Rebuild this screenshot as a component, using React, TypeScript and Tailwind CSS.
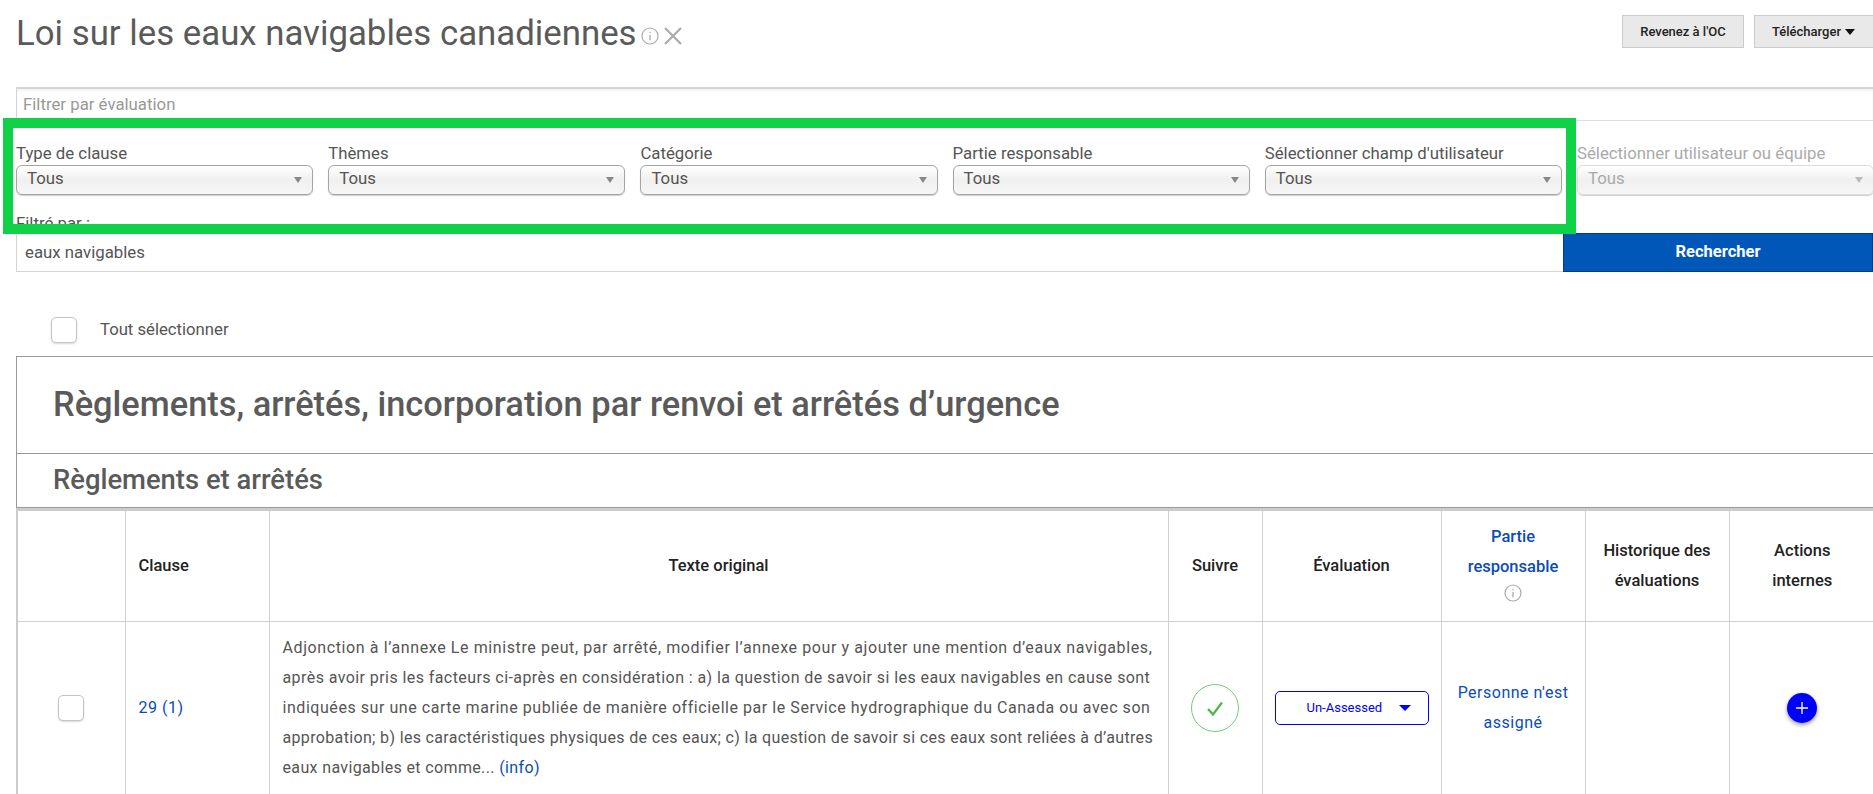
import React from "react";

const filters = [
  { label: "Type de clause" },
  { label: "Thèmes" },
  { label: "Catégorie" },
  { label: "Partie responsable" },
  { label: "Sélectionner champ d'utilisateur" },
  { label: "Sélectionner utilisateur ou équipe", disabled: true },
];

const InfoIcon = ({ className }: { className: string }) => (
  <svg viewBox="0 0 18 18" fill="none" stroke="currentColor" className={className}>
    <circle cx="9" cy="9" r="8" strokeWidth="1.2" />
    <path d="M9 8v5.2" strokeWidth="1.3" />
    <path d="M9 4.8v1.4" strokeWidth="1.3" />
  </svg>
);

const Checkbox = () => (
  <span className="block h-[26px] w-[26px] rounded-[5px] border border-[#c4c4c4] bg-white shadow-[0_1px_2px_rgba(0,0,0,0.15)]" />
);

const FilterSelect = ({ label, disabled }: { label: string; disabled?: boolean }) => (
  <div className={`w-[297.2px] shrink-0 ${disabled ? "text-[#aaa]" : "text-[#555]"}`}>
    <div className="h-[24px] text-[16.8px] leading-[24px]">{label}</div>
    <div
      className={`flex h-[30px] items-center justify-between rounded-[6px] border bg-linear-to-b from-white via-[#f0f0f0] to-[#f6f6f6] pr-[10px] pb-[2px] pl-[10px] text-[16.8px] shadow-[0_1px_1px_rgba(0,0,0,0.2)] ${
        disabled ? "border-[#ddd]" : "border-[#a5a5a5]"
      }`}
    >
      <span>Tous</span>
      <span
        className={`mt-[2px] h-0 w-0 border-x-[4px] border-t-[6px] border-x-transparent ${
          disabled ? "border-t-[#bbb]" : "border-t-[#888]"
        }`}
      />
    </div>
  </div>
);

const App = () => {
  return (
    <div className="relative h-[794px] w-[1873px] overflow-hidden bg-white font-['Roboto',sans-serif] text-[#555]">
      {/* Title bar */}
      <header className="flex h-[87px] items-start justify-between pl-4">
        <div className="mt-[13px] flex items-center text-[#aaa]">
          <h1 className="text-[34.8px] leading-[40px] font-normal text-[#5a5a5a]">Loi sur les eaux navigables canadiennes</h1>
          <InfoIcon className="mt-[5px] ml-[4px] h-[18px] w-[18px]" />
          <svg viewBox="0 0 18 18" className="mt-[5px] ml-[5px] h-[18px] w-[18px]" stroke="currentColor" strokeWidth="2.2">
            <path d="M1 1l16 16M17 1L1 17" />
          </svg>
        </div>
        <div className="mt-[15px] flex shrink-0 gap-[10px] pl-[10px] text-[13px] font-medium text-[#222]">
          <button className="h-[33px] w-[122px] border-[1.5px] border-[#ccc] bg-[#e9e9e9]">Revenez à l'OC</button>
          <button className="mr-[-10px] flex h-[33px] w-[129px] items-center gap-[4px] border-[1.5px] border-[#ccc] bg-[#e9e9e9] pl-[17px]">
            Télécharger
            <span className="h-0 w-0 border-x-[5.5px] border-t-[6px] border-x-transparent border-t-[#111]" />
          </button>
        </div>
      </header>

      {/* Filter panel */}
      <section className="ml-4">
        <div className="h-[33px] border-t-2 border-l border-[#d4d4d4] pl-[6px] text-[16.8px] leading-[31px] text-[#999] shadow-[inset_0_2px_3px_rgba(0,0,0,0.05)]">
          Filtrer par évaluation
        </div>
        <div className="h-[114px] border-t border-[#ddd]">
          <div className="flex gap-[15px] pt-[20px]">
            {filters.map((f) => (
              <FilterSelect key={f.label} label={f.label} disabled={f.disabled} />
            ))}
          </div>
          <div className="mt-[18px] text-[16.8px] leading-[20px]">Filtré par :</div>
        </div>
        <div className="flex h-[38px] items-stretch border-b-[1.5px] border-l border-[#d4d4d4]">
          <div className="flex-1 pl-[8px] text-[16.8px] leading-[37px]">eaux navigables</div>
          <button className="-mt-px h-[39px] w-[310px] border border-[#0a3a7a] bg-[#0057b8] text-[16.5px] font-bold text-white">
            Rechercher
          </button>
        </div>
      </section>

      {/* Select all */}
      <div className="mt-[45px] flex h-[26px] items-center pl-[51px]">
        <Checkbox />
        <span className="ml-[23px] text-[16.7px] leading-[24px]">Tout sélectionner</span>
      </div>

      {/* Section headings */}
      <section className="mt-[13px] ml-4">
        <div className="flex h-[97px] items-center border-t border-l border-[#999] pl-[36px] text-[34.4px] font-medium text-[#5a5a5a]">
          Règlements, arrêtés, incorporation par renvoi et arrêtés d’urgence
        </div>
        <div className="flex h-[55px] items-center border-t border-b border-l border-[#999] pl-[36px] text-[27.4px] font-medium text-[#5a5a5a]">
          Règlements et arrêtés
        </div>

        {/* Clause table */}
        <table className="w-[1858px] table-fixed border-collapse border-t-[3px] border-l-2 border-[#ccc] text-center text-[16px] leading-[30px] tracking-[0.5px]">
          <colgroup>
            <col className="w-[108px]" />
            <col className="w-[144px]" />
            <col className="w-[899px]" />
            <col className="w-[94px]" />
            <col className="w-[179px]" />
            <col className="w-[144px]" />
            <col className="w-[144px]" />
            <col className="w-[146px]" />
          </colgroup>
          <thead className="text-[16.5px] font-medium tracking-normal text-[#222]">
            <tr className="h-[112px] border-b border-[#d0d0d0]">
              <th className="border-r border-[#d0d0d0]" />
              <th className="border-r border-[#d0d0d0] pl-[13px] text-left font-medium">Clause</th>
              <th className="border-r border-[#d0d0d0] font-medium">Texte original</th>
              <th className="border-r border-[#d0d0d0] font-medium">Suivre</th>
              <th className="border-r border-[#d0d0d0] font-medium">Évaluation</th>
              <th className="border-r border-[#d0d0d0] px-3 pb-[9px] font-medium text-[#0b4db5]">
                Partie responsable
                <InfoIcon className="mx-auto mt-[2px] h-[18px] w-[18px] text-[#aaa]" />
              </th>
              <th className="border-r border-[#d0d0d0] px-3 font-medium">Historique des évaluations</th>
              <th className="px-8 font-medium">Actions internes</th>
            </tr>
          </thead>
          <tbody>
            <tr className="h-[173px] border-b border-[#d0d0d0]">
              <td className="border-r border-[#d0d0d0]">
                <div className="flex justify-center">
                  <Checkbox />
                </div>
              </td>
              <td className="border-r border-[#d0d0d0] pl-[13px] text-left text-[#0b4db5]">29 (1)</td>
              <td className="border-r border-[#d0d0d0] px-[13px] text-left whitespace-nowrap">
                <div className="tracking-[0.6px]">
                  Adjonction à l’annexe Le ministre peut, par arrêté, modifier l’annexe pour y ajouter une mention d’eaux navigables,
                </div>
                <div className="tracking-[0.42px]">
                  après avoir pris les facteurs ci-après en considération : a) la question de savoir si les eaux navigables en cause sont
                </div>
                <div className="tracking-[0.55px]">
                  indiquées sur une carte marine publiée de manière officielle par le Service hydrographique du Canada ou avec son
                </div>
                <div className="tracking-[0.34px]">
                  approbation; b) les caractéristiques physiques de ces eaux; c) la question de savoir si ces eaux sont reliées à d’autres
                </div>
                <div className="tracking-[0.36px]">
                  eaux navigables et comme... <span className="text-[#0b4db5]">(info)</span>
                </div>
              </td>
              <td className="border-r border-[#d0d0d0]">
                <div className="mx-auto flex h-[48px] w-[48px] items-center justify-center rounded-full border-[1.5px] border-[#6fcf6f]">
                  <svg viewBox="0 0 16 15" className="h-[15px] w-[16px]" fill="none" stroke="#45b945" strokeWidth="2.2">
                    <path d="M1 8l5 5.5L15 1.5" />
                  </svg>
                </div>
              </td>
              <td className="border-r border-[#d0d0d0]">
                <div className="mx-auto flex h-[34px] w-[154px] items-center rounded-[5px] border border-[#0000ff] pl-[31px] text-[13px] tracking-normal text-[#0000ff]">
                  Un-Assessed
                  <span className="ml-[17px] h-0 w-0 border-x-[6px] border-t-[6px] border-x-transparent border-t-[#0000ff]" />
                </div>
              </td>
              <td className="border-r border-[#d0d0d0] px-3 text-[#0b4db5]">Personne n'est assigné</td>
              <td className="border-r border-[#d0d0d0]" />
              <td>
                <div className="mx-auto flex h-[30px] w-[30px] items-center justify-center rounded-full bg-[#0000ff] shadow-[0_2px_4px_rgba(0,0,0,0.4)]">
                  <svg viewBox="0 0 12 12" className="h-[12px] w-[12px]" stroke="white" strokeWidth="1.3">
                    <path d="M6 0v12M0 6h12" />
                  </svg>
                </div>
              </td>
            </tr>
          </tbody>
        </table>
      </section>

      {/* Green annotation box drawn over the filters */}
      <div className="pointer-events-none absolute top-[118px] left-[3px] h-[116px] w-[1573px] border-[10px] border-[#0fd246]" />
    </div>
  );
};

export default App;
